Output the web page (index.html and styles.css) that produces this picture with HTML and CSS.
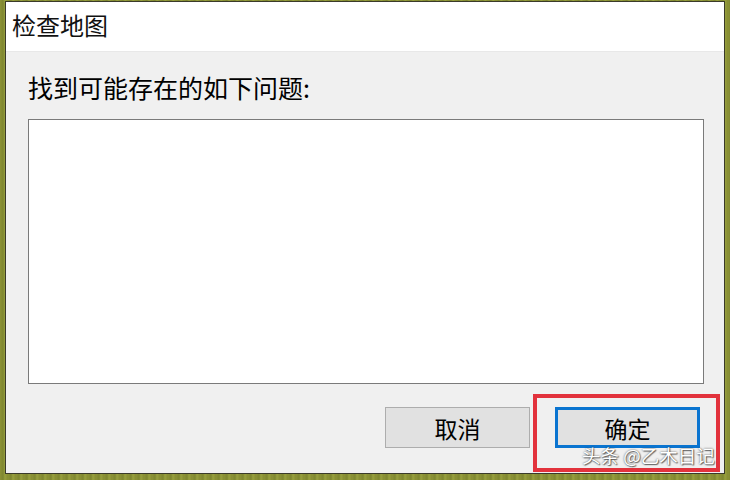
FILE: index.html
```html
<!DOCTYPE html>
<html lang="zh-CN">
<head>
    <meta charset="UTF-8">
    <title>检查地图</title>
    <link rel="stylesheet" href="styles.css">
</head>
<body>
    <div class="dialog">
        <div class="dialog-title">检查地图</div>
        <div class="dialog-body">
            <div class="dialog-label">找到可能存在的如下问题:</div>
            <div class="issue-list"></div>
            <div class="dialog-buttons">
                <button class="button">取消</button>
                <button class="button default">确定</button>
            </div>
        </div>
        <div class="highlight"></div>
        <div class="watermark">头条 @乙木日记</div>
    </div>
</body>
</html>
```

FILE: styles.css
```css
/* Reset styles */
* {
    margin: 0;
    padding: 0;
    box-sizing: border-box;
    font-family: 'Noto Sans CJK SC', 'Noto Sans', sans-serif;
}

body {
    width: 730px;
    height: 480px;
    padding: 1px 5px 6px 5px;
    background: repeating-linear-gradient(90deg, #8c9236 0, #7e8630 3px, #98a03e 5px, #868c32 8px);
    overflow: hidden;
}

.dialog {
    position: relative;
    display: flex;
    flex-direction: column;
    height: 100%;
    border: 1px solid #3a3a2a;
    background: #f0f0f0;
}

.dialog-title {
    height: 50px;
    padding: 7px 0 0 6px;
    background: #ffffff;
    border-bottom: 1px solid #e8e8e8;
    color: #111111;
    font-size: 24px;
    line-height: 32px;
}

.dialog-body {
    flex: 1;
    display: flex;
    flex-direction: column;
    padding: 19px 20px 0 22px;
}

.dialog-label {
    color: #000000;
    font-size: 25px;
    line-height: 32px;
}

.issue-list {
    height: 265px;
    margin-top: 16px;
    background: #ffffff;
    border: 1px solid #7a7a7a;
}

.dialog-buttons {
    display: flex;
    justify-content: flex-end;
    gap: 25px;
    margin-top: 23px;
    padding-right: 4px;
}

.button {
    width: 145px;
    height: 41px;
    background: #e1e1e1;
    border: 1px solid #adadad;
    color: #000000;
    font-size: 23px;
    line-height: 36px;
}

.default {
    border: 3px solid #0a74d0;
}

.highlight {
    position: absolute;
    left: 527px;
    top: 392px;
    width: 187px;
    height: 78px;
    border: 4px solid #e2323c;
}

.watermark {
    position: absolute;
    left: 576px;
    top: 440px;
    color: #ffffff;
    font-size: 18.5px;
    line-height: 26px;
    text-shadow: 0 0 2px rgba(0, 0, 0, 0.7), 1px 1px 1px rgba(0, 0, 0, 0.5);
}
```
